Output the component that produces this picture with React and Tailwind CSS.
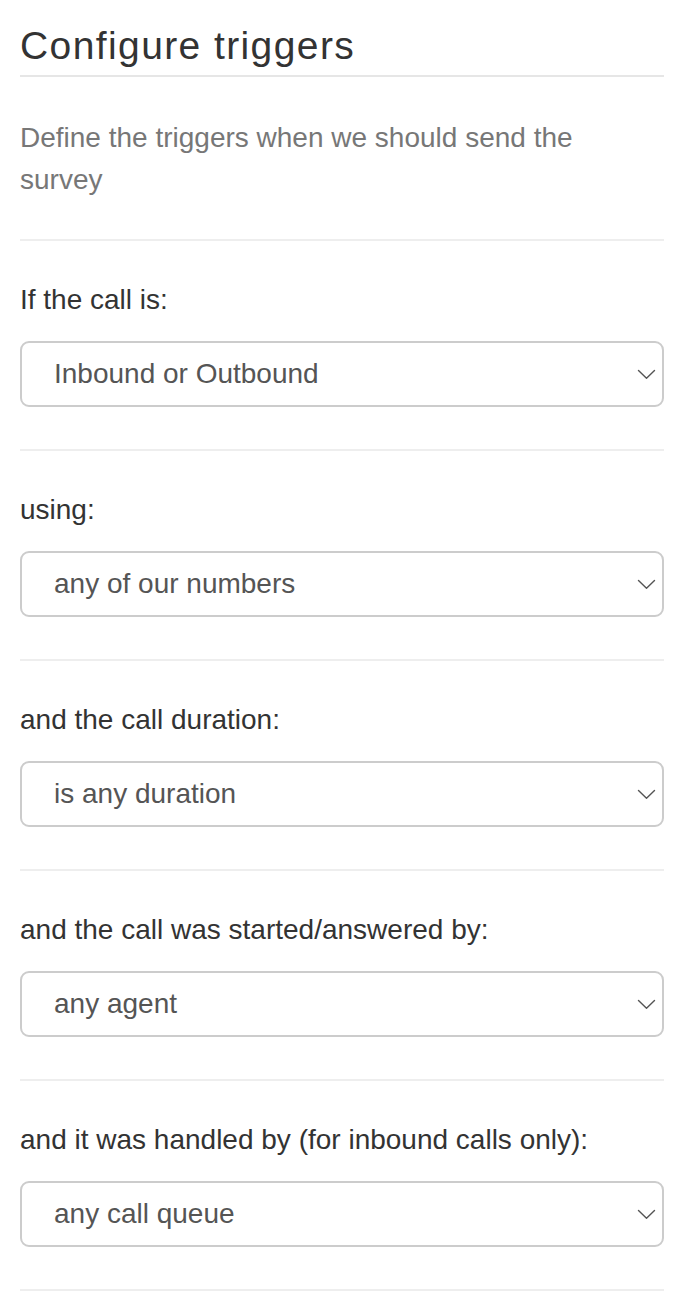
import React from 'react';

const triggers = [
  { label: 'If the call is:', value: 'Inbound or Outbound' },
  { label: 'using:', value: 'any of our numbers' },
  { label: 'and the call duration:', value: 'is any duration' },
  { label: 'and the call was started/answered by:', value: 'any agent' },
  { label: 'and it was handled by (for inbound calls only):', value: 'any call queue' },
];

function Chevron() {
  return (
    <svg width="19" height="11" viewBox="0 0 19 11" fill="none" className="shrink-0">
      <path d="M1.5 1.5 L9.5 9.3 L17.5 1.5" stroke="#555" strokeWidth="1.4" strokeLinecap="round" strokeLinejoin="round" />
    </svg>
  );
}

function App() {
  return (
    <div className="w-full min-h-screen bg-white pl-5 pr-8 font-['Liberation_Sans',Arial,sans-serif]">
      {/* Header */}
      <h1 className="pt-[24px] pb-[7px] text-[39px] leading-[44px] tracking-[1.4px] text-[#333] border-b-2 border-[#e6e6e6]">
        Configure triggers
      </h1>

      <p className="pt-[40px] pb-[38px] text-[28px] leading-[42px] text-[#777] border-b-2 border-[#eeeeee]">
        Define the triggers when we should send the<br />survey
      </p>

      {triggers.map((t) => (
        <div key={t.label} className="pt-[41px] pb-[42px] border-b-2 border-[#eeeeee]">
          <label className="block text-[28px] leading-[36px] text-[#333]">{t.label}</label>
          <div className="mt-[23px] h-[66px] flex items-center justify-between pl-[32px] pr-[6px] border-2 border-[#cccccc] rounded-[9px] bg-white">
            <span className="text-[28px] text-[#555]">{t.value}</span>
            <Chevron />
          </div>
        </div>
      ))}
    </div>
  );
}

export default App;
